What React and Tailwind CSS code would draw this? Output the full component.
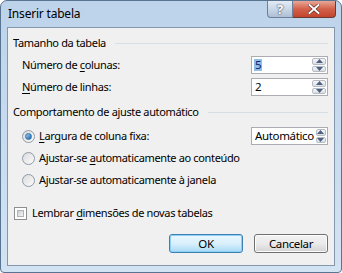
import React from "react";

const font = { fontFamily: '"Segoe UI", "Noto Sans", "Open Sans", sans-serif' };

const Arrow = ({ up }) => (
  <svg width="7" height="4" viewBox="0 0 7 4">
    <path d={up ? "M0 4 L3.5 0 L7 4 Z" : "M0 0 L3.5 4 L7 0 Z"} fill="#4d6185" />
  </svg>
);

const SpinBtn = ({ up }) => (
  <div className="flex-1 flex items-center justify-center rounded-[2px] border border-[#b6bcc6] bg-gradient-to-b from-[#f6f6f6] to-[#dcdfe3]">
    <Arrow up={up} />
  </div>
);

const Spin = ({ value, selected }) => (
  <div className="flex h-[18px] w-[77px] border border-[#abadb3] bg-white">
    <div className="flex-1 flex items-center pl-[2px] text-[11.5px] leading-none text-black">
      {selected ? <span className="bg-[#8fbde8] text-[#10246a] px-[1px]">{value}</span> : <span className="px-[1px]">{value}</span>}
    </div>
    <div className="w-[16px] flex flex-col p-[1px] gap-[1px]">
      <SpinBtn up />
      <SpinBtn />
    </div>
  </div>
);

const U = ({ children }) => <span className="underline underline-offset-[2px]">{children}</span>;

const Radio = ({ checked }) => (
  <div className="w-[13px] h-[13px] rounded-full border border-[#8e9aa8] bg-gradient-to-br from-[#dcdcdc] to-[#fbfbfb] flex items-center justify-center">
    {checked && <div className="w-[7px] h-[7px] rounded-full bg-gradient-to-br from-[#9dd5f6] to-[#1a5fa8] border border-[#2d6ea6]" />}
  </div>
);

const Header = ({ children }) => (
  <div className="flex items-center h-[16px] pl-[5px] pr-[6px] gap-[9px]">
    <span className="whitespace-nowrap">{children}</span>
    <div className="flex-1 h-px bg-[#d5dfe5]" />
  </div>
);

const App = () => {
  return (
    <div style={font} className="w-[342px] h-[273px] rounded-t-[7px] rounded-b-[4px] border border-[#587490] bg-gradient-to-b from-[#bcd3ea] via-[#c8dcef] to-[#d2e3f3] flex flex-col text-[11px] tracking-[-0.35px] text-black overflow-hidden">
      {/* title bar */}
      <div className="h-[26px] flex items-start justify-between pl-[7px] pr-[5px]">
        <span className="mt-[6px] text-[12px] leading-[14px] tracking-[-0.2px]">Inserir tabela</span>
        <div className="flex">
          <div className="w-[26px] h-[17px] rounded-bl-[4px] border border-t-0 border-[#6c809a] bg-gradient-to-b from-[#e4ecf5] via-[#c9d7e7] to-[#aebfd6] flex items-center justify-center text-[13px] font-bold text-white leading-none" style={{ textShadow: "0 0 2px #3a4a63, 0 0 1px #3a4a63" }}>
            ?
          </div>
          <div className="w-[43px] h-[17px] rounded-br-[4px] border border-t-0 border-l-0 border-[#6c3b2f] bg-gradient-to-b from-[#e8a797] via-[#d2614a] to-[#c3442c] flex items-center justify-center">
            <svg width="12" height="10" viewBox="0 0 12 10">
              <path d="M1.5 1 L10.5 9 M10.5 1 L1.5 9" stroke="#5a2218" strokeWidth="3.2" strokeLinecap="square" />
              <path d="M1.5 1 L10.5 9 M10.5 1 L1.5 9" stroke="#fff" strokeWidth="2" strokeLinecap="square" />
            </svg>
          </div>
        </div>
      </div>

      {/* client area */}
      <div className="mx-[6px] h-[239px] border border-[#8497ad] bg-[#f0f0f0] flex flex-col">
        <div className="mt-[7px]">
          <Header>Tamanho da tabela</Header>
        </div>
        <div className="mt-[5px] h-[18px] flex items-center justify-between pl-[14px] pr-[6px]">
          <span>Número de <U>c</U>olunas:</span>
          <Spin value="5" selected />
        </div>
        <div className="mt-[4px] h-[18px] flex items-center justify-between pl-[14px] pr-[6px]">
          <span><U>N</U>úmero de linhas:</span>
          <Spin value="2" />
        </div>
        <div className="mt-[8px]">
          <Header>Comportamento de ajuste automático</Header>
        </div>
        <div className="mt-[7px] h-[18px] flex items-center justify-between pl-[14px] pr-[6px]">
          <div className="flex items-center gap-[4px]">
            <Radio checked />
            <span><U>L</U>argura de coluna fixa:</span>
          </div>
          <Spin value="Automático" />
        </div>
        <div className="mt-[5px] h-[16px] flex items-center gap-[4px] pl-[14px]">
          <Radio />
          <span>Ajustar-se <U>a</U>utomaticamente ao conteúdo</span>
        </div>
        <div className="mt-[6px] h-[16px] flex items-center gap-[4px] pl-[14px]">
          <Radio />
          <span>Ajustar-se automaticamente à <U>j</U>anela</span>
        </div>
        <div className="mt-[17px] h-[16px] flex items-center gap-[5px] pl-[6px]">
          <div className="w-[13px] h-[13px] border border-[#8e8f8f] bg-white p-[2px]">
            <div className="w-full h-full bg-gradient-to-br from-[#cbcfd5] to-[#f6f6f6] border border-[#aeb3b9]" />
          </div>
          <span>Lembrar <U>d</U>imensões de novas tabelas</span>
        </div>
        <div className="mt-[13px] flex justify-end gap-[11px] pr-[6px]">
          <button className="w-[74px] h-[19px] rounded-[3px] border border-[#3c7fb1] bg-gradient-to-b from-[#eaf6fd] via-[#d9f0fc] to-[#a7d9f5] text-[11.5px] leading-none shadow-[inset_0_0_0_1px_#8fd1f6]">
            OK
          </button>
          <button className="w-[74px] h-[19px] rounded-[3px] border border-[#707070] bg-gradient-to-b from-[#f2f2f2] via-[#ebebeb] to-[#d3d3d3] text-[11.5px] leading-none shadow-[inset_0_0_0_1px_#fcfcfc]">
            Cancelar
          </button>
        </div>
      </div>
    </div>
  );
};

export default App;
